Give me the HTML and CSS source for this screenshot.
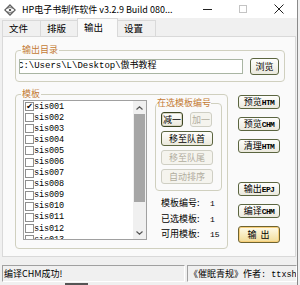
FILE: index.html
```html
<!DOCTYPE html>
<html>
<head>
    <title>HP电子书制作软件</title>
    <link rel="stylesheet" href="styles.css">
</head>
<body>
<div class="window">
    <div class="titlebar">
        <svg class="app-icon" width="12" height="12" viewBox="0 0 12 12">
            <path d="M6 0.8 L11.2 6 L6 11.2 L0.8 6 Z" fill="none" stroke="#5a5a5a" stroke-width="1.1"/>
            <path d="M3.5 4.5 L6 2.8 L8.5 4.5 M3.5 7.5 L6 9.2 L8.5 7.5" fill="none" stroke="#5a5a5a" stroke-width="1"/>
            <circle cx="6" cy="6" r="1.2" fill="#5a5a5a"/>
        </svg>
        <span class="title">HP电子书制作软件 v3.2.9 Build 080...</span>
        <div class="controls">
            <span class="ctl"><i class="min"></i></span>
            <span class="ctl"><i class="max"></i></span>
            <span class="ctl">
                <svg width="10" height="10" viewBox="0 0 10 10"><path d="M0.5 0.5 L9.5 9.5 M9.5 0.5 L0.5 9.5" stroke="#222" stroke-width="1"/></svg>
            </span>
        </div>
    </div>

    <div class="tabs">
        <div class="tab">文件</div>
        <div class="tab">排版</div>
        <div class="tab active">输出</div>
        <div class="tab">设置</div>
    </div>

    <div class="tabpage">
        <fieldset class="group out-dir">
            <legend>输出目录</legend>
            <div class="dir-row">
                <div class="textbox"><span>C:\Users\L\Desktop\傲书教程</span></div>
                <button class="btn browse">浏览</button>
            </div>
        </fieldset>

        <div class="main-row">
            <fieldset class="group templates">
                <legend>模板</legend>
                <div class="tpl-row">
                    <div class="listbox">
                        <div class="items">
                            <div class="item"><span class="check checked">&#10004;</span>sis001</div>
                            <div class="item"><span class="check"></span>sis002</div>
                            <div class="item"><span class="check"></span>sis003</div>
                            <div class="item"><span class="check"></span>sis004</div>
                            <div class="item"><span class="check"></span>sis005</div>
                            <div class="item"><span class="check"></span>sis006</div>
                            <div class="item"><span class="check"></span>sis007</div>
                            <div class="item"><span class="check"></span>sis008</div>
                            <div class="item"><span class="check"></span>sis009</div>
                            <div class="item"><span class="check"></span>sis010</div>
                            <div class="item"><span class="check"></span>sis011</div>
                            <div class="item"><span class="check"></span>sis012</div>
                            <div class="item"><span class="check"></span>sis013</div>
                        </div>
                        <div class="scrollbar">
                            <div class="arrow">
                                <svg width="7" height="4" viewBox="0 0 7 4"><path d="M0.5 3.5 L3.5 0.8 L6.5 3.5" fill="none" stroke="#555" stroke-width="1.2"/></svg>
                            </div>
                            <div class="thumb"></div>
                            <div class="track"></div>
                            <div class="arrow">
                                <svg width="7" height="4" viewBox="0 0 7 4"><path d="M0.5 0.5 L3.5 3.2 L6.5 0.5" fill="none" stroke="#555" stroke-width="1.2"/></svg>
                            </div>
                        </div>
                    </div>

                    <div class="side">
                        <fieldset class="group sel">
                            <legend>在选模板编号</legend>
                            <div class="btn-pair">
                                <button class="btn small focus">减一</button>
                                <button class="btn small" disabled>加一</button>
                            </div>
                            <button class="btn wide">移至队首</button>
                            <button class="btn wide" disabled>移至队尾</button>
                            <button class="btn wide" disabled>自动排序</button>
                        </fieldset>
                        <div class="info">
                            <div><span class="key">模板编号:</span><span class="val">1</span></div>
                            <div><span class="key">已选模板:</span><span class="val">1</span></div>
                            <div><span class="key">可用模板:</span><span class="val">15</span></div>
                        </div>
                    </div>
                </div>
            </fieldset>

            <div class="actions">
                <button class="btn act">预览<b>HTM</b></button>
                <button class="btn act">预览<b>CHM</b></button>
                <button class="btn act">清理<b>HTM</b></button>
                <button class="btn act first-low">输出<b>EPJ</b></button>
                <button class="btn act">编译<b>CHM</b></button>
                <button class="btn act hot">输 出</button>
            </div>
        </div>
    </div>

    <div class="statusbar">
        <div class="pane msg">编译CHM成功!</div>
        <div class="pane author">《催眠青规》作者<span class="mono">: ttxsh</span></div>
    </div>
    <div class="bottom-edge"><span></span></div>
</div>
</body>
</html>
```

FILE: styles.css
```css
* {
    box-sizing: border-box;
}

body {
    margin: 0;
    background: #f0f0f0;
    font-family: "Noto Sans CJK SC", "Liberation Sans", sans-serif;
    font-size: 9px;
    color: #000;
}

.window {
    width: 298px;
    height: 285px;
    display: flex;
    flex-direction: column;
    background: #f0f0f0;
    border-right: 1px solid #8a8a8a;
}

/* title bar */
.titlebar {
    height: 18px;
    background: #fff;
    display: flex;
    align-items: center;
    padding-left: 4px;
}

.app-icon {
    margin-top: 2px;
}

.title {
    margin-left: 6px;
    font-size: 9px;
    white-space: nowrap;
}

.controls {
    margin-left: auto;
    display: flex;
    height: 18px;
}

.ctl {
    width: 36px;
    display: flex;
    align-items: center;
    justify-content: center;
}

.ctl .min {
    display: block;
    width: 9px;
    height: 1px;
    background: #222;
}

.ctl .max {
    display: block;
    width: 8px;
    height: 8px;
    border: 1px solid #c4c4c4;
}

/* tabs */
.tabs {
    height: 18px;
    display: flex;
    align-items: flex-end;
    padding-left: 2px;
    position: relative;
    z-index: 1;
}

.tab {
    width: 39px;
    height: 16px;
    margin-right: -1px;
    padding-left: 6px;
    border: 1px solid #d9d9d9;
    border-bottom: none;
    background: #f0f0f0;
    font-size: 9.5px;
    line-height: 15px;
}

.tab.active {
    width: 41px;
    height: 19px;
    margin: 0 -1px -1px -1px;
    padding-left: 6px;
    background: #fafafa;
    line-height: 16px;
    position: relative;
    z-index: 2;
}

/* tab page */
.tabpage {
    margin: 0 0 0 2px;
    width: 294px;
    height: 221px;
    border: 1px solid #d9d9d9;
    background: #fafafa;
}

.group {
    margin: 0;
    border: 1px solid #d0d0bf;
    border-radius: 4px;
    min-width: 0;
}

.group legend {
    padding: 0 1px;
    color: #c47a35;
    line-height: 12px;
    font-size: 9px;
}

.out-dir {
    margin: 7px 10px 0 12px;
    padding: 2px 5px 6px 3px;
}

.out-dir legend {
    margin-left: 2px;
}

.dir-row {
    display: flex;
    align-items: center;
    gap: 7px;
}

.textbox {
    width: 224px;
    height: 15px;
    border: 1px solid #a9b5a3;
    background: #fff;
    overflow: hidden;
    white-space: nowrap;
    font-family: "Liberation Mono", "Noto Sans CJK SC", monospace;
    font-size: 9px;
    line-height: 13px;
    text-indent: -2px;
}

.btn {
    padding: 0;
    border: 1px solid #5b6540;
    border-radius: 3px;
    background: linear-gradient(#fefefc, #ebe9dd);
    font-family: "Noto Sans CJK SC", sans-serif;
    font-size: 9px;
    line-height: 12px;
    color: #000;
    white-space: nowrap;
}

.btn:disabled {
    border-color: #cfcfc4;
    background: #f5f4ee;
    color: #b1ad9e;
}

.btn b {
    font-family: "Liberation Mono", monospace;
    font-size: 8px;
    letter-spacing: -0.6px;
}

.browse {
    width: 29px;
    height: 17px;
}

/* template group */
.main-row {
    display: flex;
    align-items: flex-start;
    margin-top: 6px;
}

.templates {
    width: 213px;
    margin-left: 12px;
    padding: 0 5px 5px 7px;
}

.templates legend {
    margin-left: -2px;
}

.tpl-row {
    display: flex;
    align-items: flex-start;
    gap: 8px;
}

.listbox {
    width: 124px;
    height: 140px;
    border: 1px solid #a0a0a0;
    background: #fff;
    display: flex;
    overflow: hidden;
}

.items {
    flex: 1;
    overflow: hidden;
}

.item {
    height: 11.1px;
    display: flex;
    align-items: center;
    font-family: "Liberation Mono", monospace;
    font-size: 8.5px;
    letter-spacing: -0.1px;
}

.check {
    width: 9px;
    height: 9px;
    margin: 0 0 0 1px;
    border: 1px solid #8e8e8e;
    background: #fff;
    font-size: 8px;
    line-height: 7px;
    text-align: center;
    font-family: "DejaVu Sans", sans-serif;
}

.scrollbar {
    width: 13px;
    display: flex;
    flex-direction: column;
    background: #f0f0f0;
}

.scrollbar .arrow {
    height: 13px;
    display: flex;
    align-items: center;
    justify-content: center;
}

.scrollbar .thumb {
    height: 88px;
    margin: 0 1px;
    background: #a6a6a6;
}

.scrollbar .track {
    flex: 1;
}

.side {
    width: 67px;
    margin-top: -3px;
}

.sel {
    padding: 3px 4px 6px 5px;
    display: flex;
    flex-direction: column;
    gap: 4px;
}

.sel legend {
    margin-left: -4px;
    padding: 0;
}

.btn-pair {
    display: flex;
    gap: 7px;
}

.btn.small {
    width: 22px;
    height: 15px;
}

.btn.focus {
    border-color: #3d4622;
    box-shadow: inset 0 0 0 1px #d9d6c4;
}

.btn.wide {
    width: 52px;
    height: 15px;
}

.info {
    margin-top: 5px;
    padding-left: 6px;
    line-height: 14.5px;
}

.info .key {
    display: inline-block;
    width: 49px;
}

.info .val {
    font-family: "Liberation Mono", monospace;
    font-size: 8px;
}

/* right button column */
.actions {
    width: 42px;
    margin-left: 10px;
    padding-top: 7px;
    display: flex;
    flex-direction: column;
    gap: 8px;
}

.btn.act {
    width: 42px;
    height: 14px;
}

.btn.first-low {
    margin-top: 21px;
}

.btn.hot {
    height: 17px;
    border-color: #6e6330;
    background: linear-gradient(#fffbea, #f2dc98);
    box-shadow: inset 0 0 0 1px #f7cf7a;
    letter-spacing: 1px;
}

/* status bar */
.statusbar {
    display: flex;
    gap: 2px;
    margin-top: 8px;
    padding-left: 2px;
    height: 17px;
}

.pane {
    border: 1px solid #a0a0a0;
    border-right-color: #fff;
    border-bottom-color: #fff;
    line-height: 15px;
    white-space: nowrap;
    overflow: hidden;
}

.pane.msg {
    width: 183px;
    padding-left: 1px;
}

.pane.author {
    flex: 1;
    padding-left: 1px;
}

.mono {
    font-family: "Liberation Mono", monospace;
    font-size: 8.5px;
}

.bottom-edge {
    flex: 1;
}

.bottom-edge span {
    display: block;
    margin: 1px 0 0 65px;
    width: 23px;
    height: 2px;
    background: #555;
}
```
